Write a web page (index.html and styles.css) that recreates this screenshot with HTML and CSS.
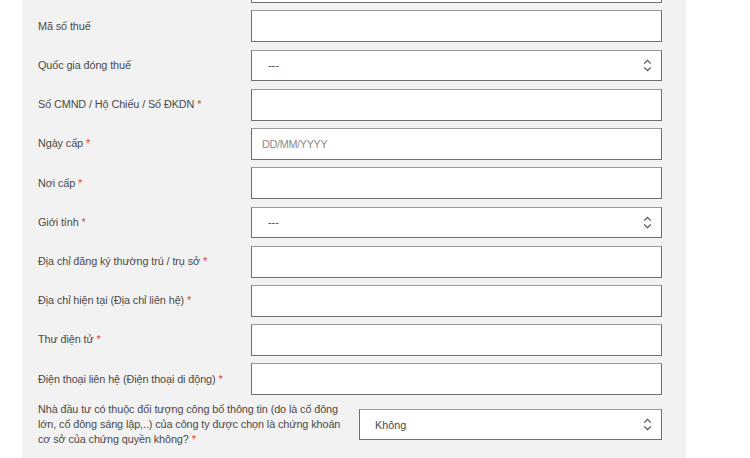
FILE: index.html
```html
<!DOCTYPE html>
<html lang="vi">
<head>
<meta charset="utf-8">
<link rel="stylesheet" href="styles.css">
</head>
<body>
<div class="page">
  <form class="panel">
    <div class="row"><span class="lbl"></span><input class="field" type="text"></div>
    <div class="row"><label class="lbl">Mã số thuế</label><input class="field" type="text"></div>
    <div class="row"><label class="lbl">Quốc gia đóng thuế</label><div class="select"><span class="val">---</span><svg class="chev" width="9" height="13" viewBox="0 0 9 13"><path d="M1.2 4.6 L4.5 1.4 L7.8 4.6 M1.2 8.4 L4.5 11.6 L7.8 8.4" fill="none" stroke="#555" stroke-width="1.3"/></svg></div></div>
    <div class="row"><label class="lbl">Số CMND / Hộ Chiếu / Số ĐKDN <span class="req">*</span></label><input class="field" type="text"></div>
    <div class="row"><label class="lbl">Ngày cấp <span class="req">*</span></label><input class="field" type="text" placeholder="DD/MM/YYYY"></div>
    <div class="row"><label class="lbl">Nơi cấp <span class="req">*</span></label><input class="field" type="text"></div>
    <div class="row"><label class="lbl">Giới tính <span class="req">*</span></label><div class="select"><span class="val">---</span><svg class="chev" width="9" height="13" viewBox="0 0 9 13"><path d="M1.2 4.6 L4.5 1.4 L7.8 4.6 M1.2 8.4 L4.5 11.6 L7.8 8.4" fill="none" stroke="#555" stroke-width="1.3"/></svg></div></div>
    <div class="row"><label class="lbl">Địa chỉ đăng ký thường trú / trụ sở <span class="req">*</span></label><input class="field" type="text"></div>
    <div class="row"><label class="lbl">Địa chỉ hiện tại (Địa chỉ liên hệ) <span class="req">*</span></label><input class="field" type="text"></div>
    <div class="row"><label class="lbl">Thư điện tử <span class="req">*</span></label><input class="field" type="text"></div>
    <div class="row"><label class="lbl">Điện thoại liên hệ (Điện thoại di động) <span class="req">*</span></label><input class="field" type="text"></div>
    <div class="row row-wide"><label class="lbl lbl-multi">Nhà đầu tư có thuộc đối tượng công bố thông tin (do là cổ đông lớn, cổ đông sáng lập,..) của công ty được chọn là chứng khoán cơ sở của chứng quyền không? <span class="req">*</span></label><div class="select select-wide"><span class="val">Không</span><svg class="chev" width="9" height="13" viewBox="0 0 9 13"><path d="M1.2 4.6 L4.5 1.4 L7.8 4.6 M1.2 8.4 L4.5 11.6 L7.8 8.4" fill="none" stroke="#555" stroke-width="1.3"/></svg></div></div>
  </form>
</div>
</body>
</html>
```
FILE: styles.css
```css
html, body {
  margin: 0;
  padding: 0;
  background: #ffffff;
  overflow: hidden;
}
body {
  font-family: "Liberation Sans", Arial, sans-serif;
  font-size: 11px;
  color: #4a4a4a;
}
.page {
  padding-left: 22px;
  width: 750px;
  height: 458px;
  box-sizing: border-box;
  overflow: hidden;
}
.panel {
  width: 664px;
  box-sizing: border-box;
  background: #f2f2f2;
  padding: 0 24px 20px 16px;
  margin-top: -29px;
  display: flex;
  flex-direction: column;
  gap: 7.22px;
}
.row {
  display: grid;
  grid-template-columns: 213px 411px;
  align-items: center;
  min-height: 32px;
}
.row-wide {
  grid-template-columns: 305px 303px;
  column-gap: 16px;
}
.lbl {
  color: #4a4a4a;
  font-size: 10.85px;
  line-height: 15px;
  letter-spacing: -0.1px;
}
.req {
  color: #e53935;
}
.field {
  display: block;
  box-sizing: border-box;
  width: 411px;
  height: 32px;
  margin: 0;
  padding: 0 10px;
  border: 1px solid #6f6f6f;
  border-top-color: #9a9a9a;
  background: #fff;
  font-family: "Liberation Sans", Arial, sans-serif;
  font-size: 10.8px;
  color: #333;
  outline: none;
}
.field::placeholder {
  color: #8a8a8a;
  letter-spacing: -0.3px;
}
.select {
  box-sizing: border-box;
  width: 411px;
  height: 31px;
  border: 1px solid #6f6f6f;
  border-top-color: #9a9a9a;
  background: #fff;
  display: flex;
  align-items: center;
  justify-content: space-between;
  padding: 0 9px 0 16px;
}
.select-wide {
  width: 303px;
  padding-left: 15px;
}
.val {
  color: #4a4a4a;
  font-size: 10.8px;
}
.chev {
  display: block;
}
```
